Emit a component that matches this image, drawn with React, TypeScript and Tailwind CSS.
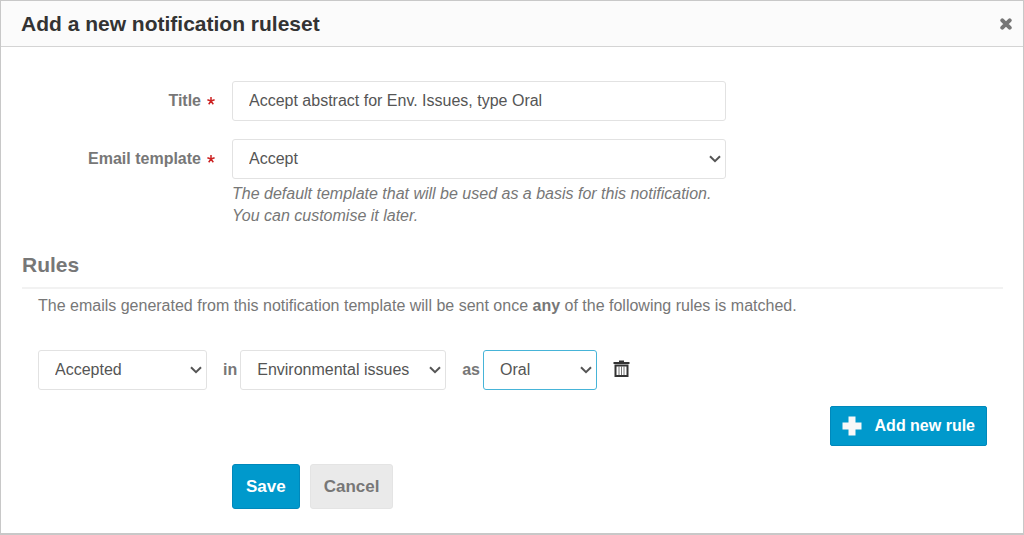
import React, { useState } from "react";

interface RuleSelectProps {
  label: string;
  options: string[];
  className: string;
}

const selectBase =
  "h-10 w-full appearance-none rounded-[3px] border bg-white pl-4 pr-8 text-[16px] text-[#555] outline-none";

const Chevron: React.FC = () => (
  <svg
    className="pointer-events-none absolute right-[5px] top-[14px]"
    width="12"
    height="12"
    viewBox="0 0 12 12"
    fill="none"
    stroke="#555"
    strokeWidth="2"
  >
    <path d="M1 3.2 L6 8.2 L11 3.2" />
  </svg>
);

const RuleSelect: React.FC<RuleSelectProps> = ({ label, options, className }) => (
  <div className={`relative ${className}`}>
    <select
      aria-label={label}
      className={`${selectBase} border-inherit`}
    >
      {options.map((option) => (
        <option key={option}>{option}</option>
      ))}
    </select>
    <Chevron />
  </div>
);

const Required: React.FC = () => (
  <svg className="ml-[6px]" width="8" height="12" viewBox="0 0 8 12" stroke="#c22" strokeWidth="1.5">
    <path d="M4 2 V6 M0.4 4.8 L4 6 L7.6 4.8 M1.7 9.2 L4 6 L6.3 9.2" fill="none" />
  </svg>
);

const App: React.FC = () => {
  const [title, setTitle] = useState("Accept abstract for Env. Issues, type Oral");

  return (
    <div className="border border-b-2 border-[#c8c8c8] bg-white font-['Liberation_Sans',Arial,sans-serif] text-[#777]">
      {/* Header */}
      <header className="flex h-[46px] items-center justify-between border-b border-[#d4d4d4] bg-[#fbfbfb] pl-5 pr-[11px]">
        <h1 className="text-[21px] font-bold text-[#333]">Add a new notification ruleset</h1>
        <button type="button" aria-label="Close">
          <svg width="12" height="12" viewBox="0 0 12 12" stroke="#777" strokeWidth="4" strokeLinecap="round">
            <path d="M2.3 2.3 L9.7 9.7 M9.7 2.3 L2.3 9.7" />
          </svg>
        </button>
      </header>

      <form className="pb-6 pt-[34px]" onSubmit={(e) => e.preventDefault()}>
        {/* Title */}
        <div className="mb-[18px] flex">
          <label
            htmlFor="title"
            className="flex h-10 w-[214px] shrink-0 items-center justify-end text-[16px] font-bold"
          >
            Title
            <Required />
          </label>
          <input
            id="title"
            type="text"
            value={title}
            onChange={(e) => setTitle(e.target.value)}
            className="ml-[17px] h-10 w-full max-w-[494px] rounded-[3px] border border-[#e2e2e2] px-4 text-[16px] text-[#555] outline-none"
          />
        </div>

        {/* Email template */}
        <div className="flex">
          <label
            htmlFor="template"
            className="flex h-10 w-[214px] shrink-0 items-center justify-end text-[16px] font-bold"
          >
            Email template
            <Required />
          </label>
          <div className="ml-[17px] w-full max-w-[494px]">
            <div className="relative">
              <select id="template" className={`${selectBase} border-[#e2e2e2]`}>
                <option>Accept</option>
                <option>Reject</option>
              </select>
              <Chevron />
            </div>
            <p className="mt-1 text-[16px] italic leading-[22px]">
              The default template that will be used as a basis for this notification.
              <br />
              You can customise it later.
            </p>
          </div>
        </div>

        {/* Rules */}
        <section className="ml-[21px] mr-5">
          <h2 className="mt-6 border-b-2 border-[#f2f2f2] pb-2 text-[21px] font-bold leading-7">Rules</h2>
          <div className="px-4">
            <p className="mt-[6px] text-[16px] leading-[22px]">
              The emails generated from this notification template will be sent once{" "}
              <strong>any</strong> of the following rules is matched.
            </p>

            <div className="mt-[33px] flex items-center text-[16px] font-bold">
              <RuleSelect
                label="State"
                options={["Accepted", "Rejected", "Merged"]}
                className="w-[169px] border-[#e2e2e2] font-normal"
              />
              <span className="ml-4">in</span>
              <RuleSelect
                label="Track"
                options={["Environmental issues", "Any track"]}
                className="ml-[3px] w-[206px] border-[#e2e2e2] font-normal"
              />
              <span className="ml-4">as</span>
              <RuleSelect
                label="Contribution type"
                options={["Oral", "Poster"]}
                className="ml-[3px] w-[114px] border-[#46b4d8] font-normal"
              />
              <button type="button" aria-label="Remove rule" className="ml-4">
                <svg width="17" height="20" viewBox="0 0 17 20" fill="none" stroke="#333">
                  <path d="M0.5 3 H16.5" strokeWidth="2" />
                  <path d="M6 1.5 H11" strokeWidth="2" />
                  <path d="M2.5 5.5 V16 H14.5 V5.5 Z" strokeWidth="2" />
                  <path d="M6 6 V15 M8.5 6 V15 M11 6 V15" stroke="#777" strokeWidth="1" />
                </svg>
              </button>
            </div>

            <div className="mt-4 flex justify-end">
              <button
                type="button"
                className="flex h-10 items-center rounded-[2px] border border-[#0088bb] bg-[#0099cc] px-[11px] text-[16px] font-bold text-white"
              >
                <svg className="mr-[13px]" width="20" height="20" viewBox="0 0 20 20" fill="#f8f8f8">
                  <path d="M6.5 0.5 H13.5 V6.5 H19.5 V13.5 H13.5 V19.5 H6.5 V13.5 H0.5 V6.5 H6.5 Z" />
                </svg>
                Add new rule
              </button>
            </div>
          </div>
        </section>

        {/* Actions */}
        <div className="ml-[231px] mt-[18px] flex gap-[10px]">
          <button
            type="submit"
            className="h-[45px] rounded-[3px] border border-[#0088bb] bg-[#0099cc] px-[13px] text-[17px] font-bold text-white"
          >
            Save
          </button>
          <button
            type="button"
            className="h-[45px] rounded-[3px] border border-[#e4e4e4] bg-[#eaeaea] px-[13px] text-[17px] font-bold"
          >
            Cancel
          </button>
        </div>
      </form>
    </div>
  );
};

export default App;
